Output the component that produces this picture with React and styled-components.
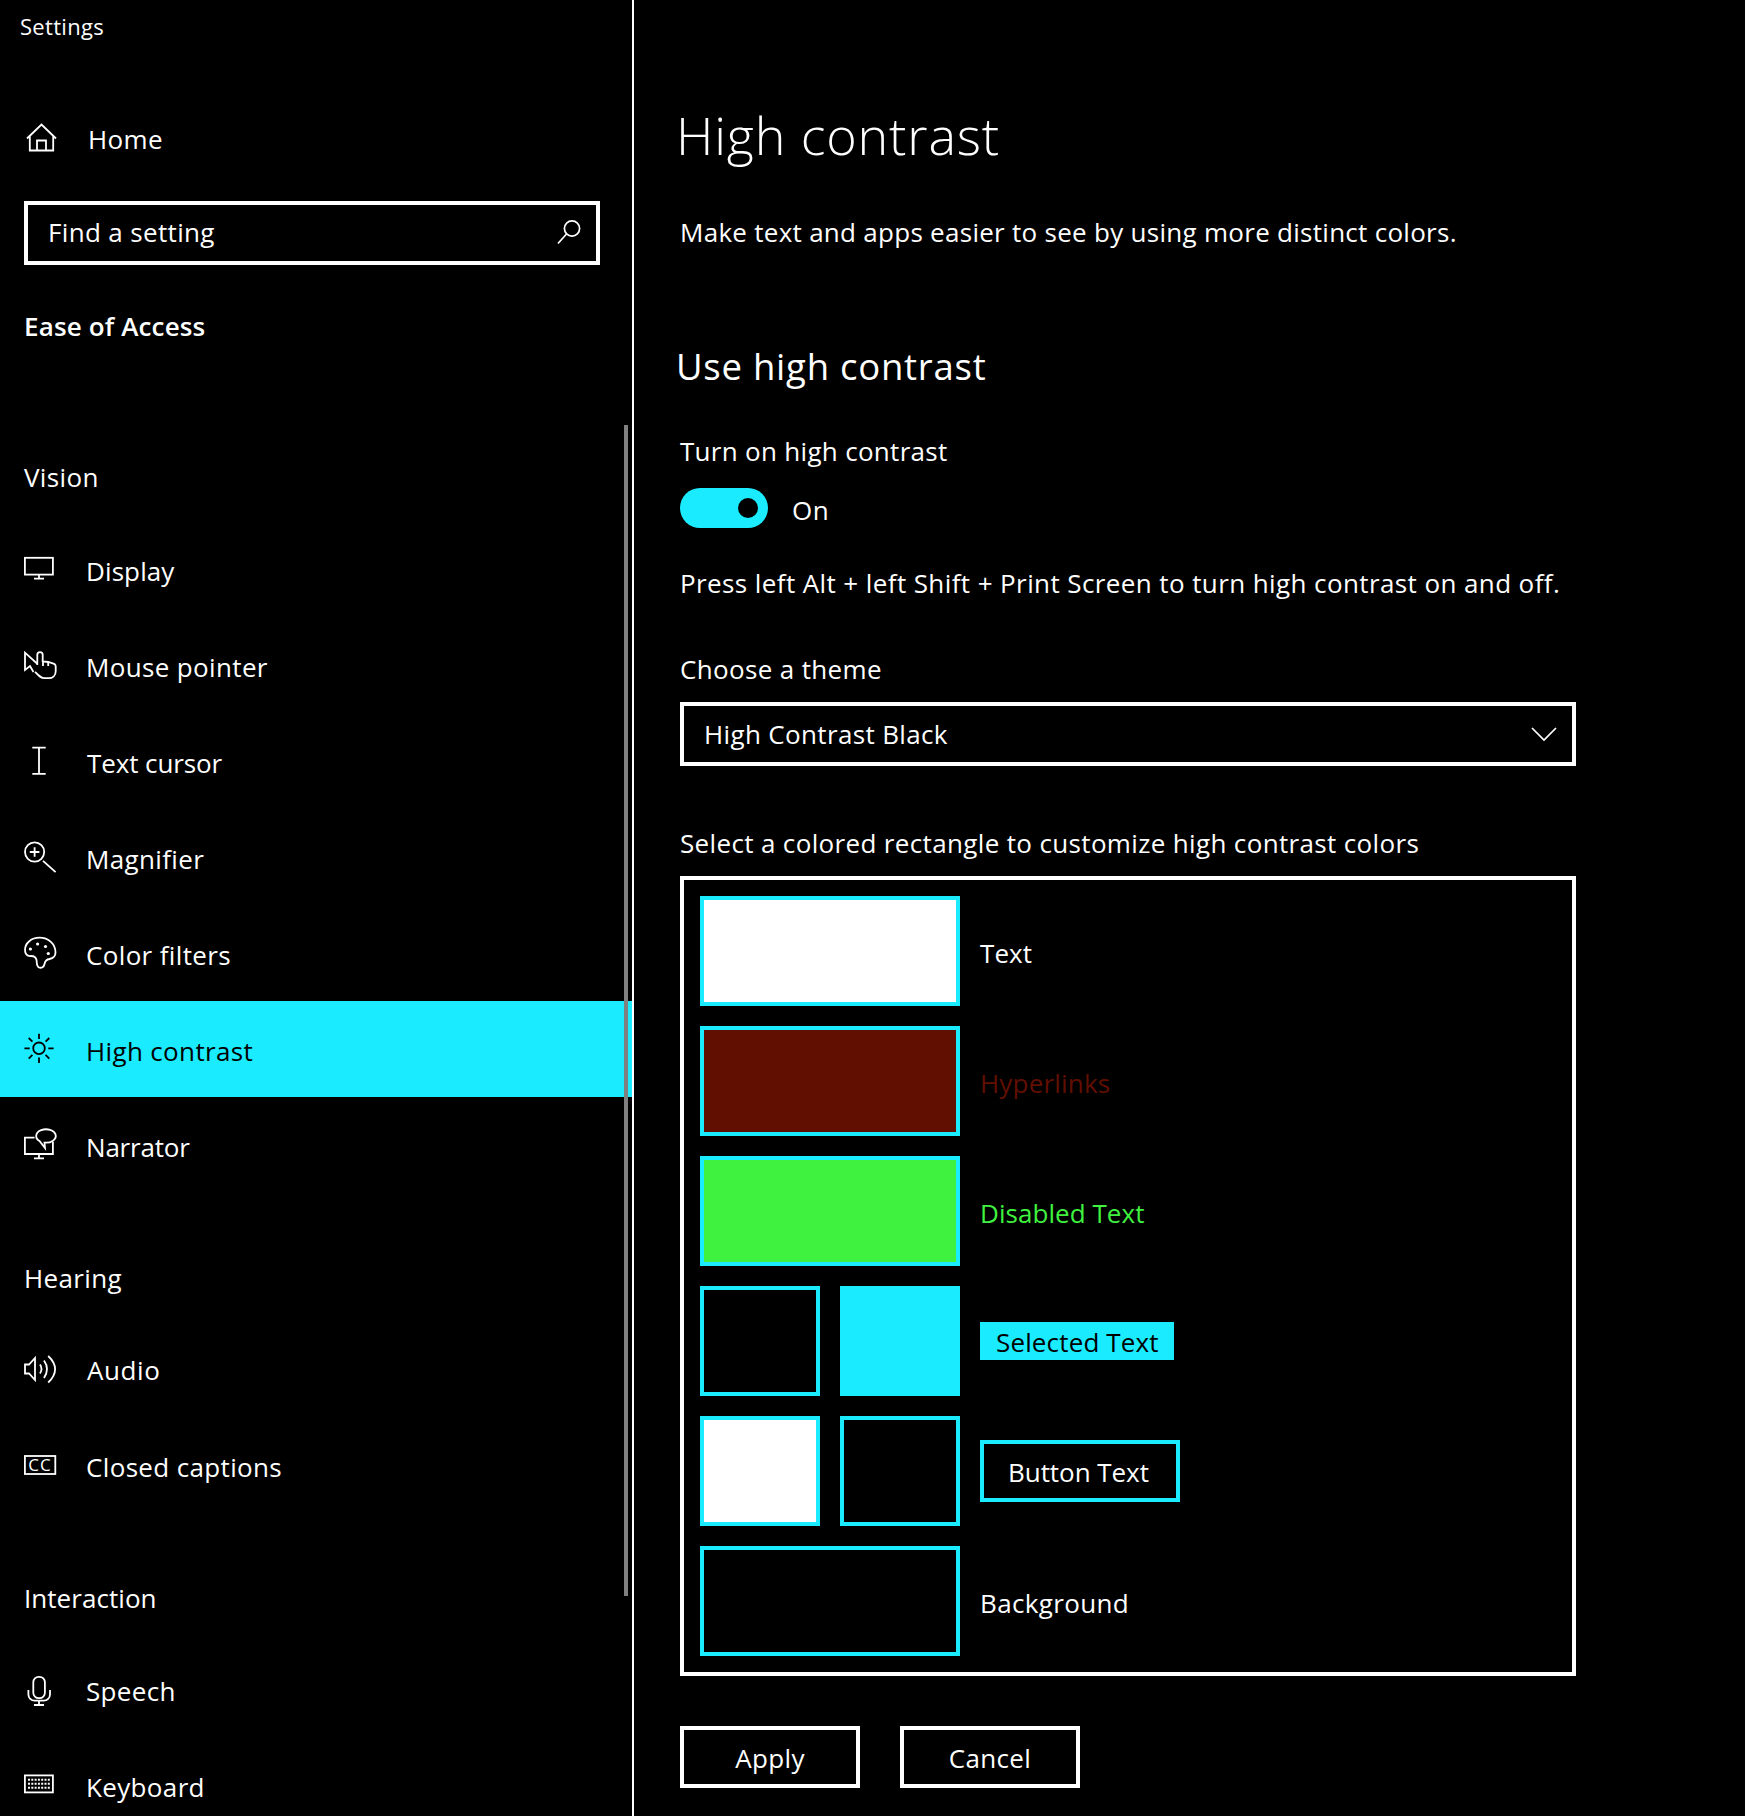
import React from 'react';
import styled, {createGlobalStyle} from 'styled-components';

const CYAN = '#1aebff';
const FONT = '"Open Sans", "Noto Sans", sans-serif';

const GlobalStyle = createGlobalStyle`
    html, body {
        margin: 0;
        background: #000;
    }
    body {
        font-family: ${FONT};
        color: #fff;
    }
`;

const Page = styled.div`
    display: flex;
    width: 1745px;
    height: 1816px;
    overflow: hidden;
    background: #000;
`;

const Sidebar = styled.nav`
    position: relative;
    flex: none;
    box-sizing: content-box;
    width: 632px;
    height: 1816px;
    border-right: 2px solid #fff;
    overflow: hidden;
`;

const WindowTitle = styled.div`
    height: 91px;
    padding: 7px 0 0 20px;
    box-sizing: border-box;
    font-size: 22px;
    line-height: 38px;
    letter-spacing: 0.3px;
`;

const NavItem = styled.div`
    display: flex;
    align-items: center;
    height: 96px;
    padding-left: 24px;
    background: ${p => (p.$active ? CYAN : 'transparent')};
    color: ${p => (p.$active ? '#000' : '#fff')};
`;

const IconSlot = styled.div`
    flex: none;
    width: 62px;
`;

const NavText = styled.span`
    margin-left: ${p => p.$shift || 0}px;
    padding-top: ${p => p.$drop ?? 3}px;
    font-size: 26px;
    line-height: 40px;
    letter-spacing: ${p => p.$ls ?? 0.35}px;
`;

const SearchBox = styled.div`
    display: flex;
    align-items: center;
    justify-content: space-between;
    box-sizing: border-box;
    width: 576px;
    height: 64px;
    margin: 14px 0 0 24px;
    padding: 0 14px 2px 20px;
    border: 4px solid #fff;
    font-size: 26px;
    letter-spacing: 0.35px;
`;

const SectionTitle = styled.div`
    margin: 41px 0 111px 24px;
    font-size: 26px;
    font-weight: 600;
    line-height: 40px;
    letter-spacing: 0.15px;
`;

const GroupLabel = styled.div`
    height: ${p => p.$height || 64}px;
    margin: ${p => (p.$first ? 0 : `${p.$gap || 65}px`)} 0 0 24px;
    font-size: 26px;
    line-height: 40px;
    letter-spacing: ${p => p.$ls ?? 0.35}px;
`;

const ScrollThumb = styled.div`
    position: absolute;
    top: 425px;
    left: 624px;
    width: 4px;
    height: 1171px;
    background: #808080;
`;

const Main = styled.main`
    flex: 1;
    padding: 103px 0 0 46px;
`;

const PageTitle = styled.h1`
    margin: 0 0 0 -4px;
    font-size: 52px;
    font-weight: 300;
    line-height: 64px;
    letter-spacing: 0.85px;
`;

const SubTitle = styled.h2`
    margin: 89px 0 0 -4px;
    font-size: 36.5px;
    font-weight: 400;
    line-height: 50px;
    letter-spacing: 0.75px;
`;

const BodyText = styled.div`
    margin-top: ${p => p.$top}px;
    font-size: 26px;
    line-height: 40px;
    letter-spacing: ${p => p.$ls ?? 0.35}px;
`;

const ToggleRow = styled.div`
    display: flex;
    align-items: center;
    gap: 24px;
    height: 40px;
    margin-top: 17px;
`;

const ToggleTrack = styled.div`
    position: relative;
    width: 88px;
    height: 40px;
    border-radius: 20px;
    background: ${CYAN};
`;

const ToggleKnob = styled.div`
    position: absolute;
    top: 10px;
    right: 10px;
    width: 20px;
    height: 20px;
    border-radius: 50%;
    background: #000;
`;

const Dropdown = styled.div`
    display: flex;
    align-items: center;
    justify-content: space-between;
    box-sizing: border-box;
    width: 896px;
    height: 64px;
    margin-top: 13px;
    padding: 0 15px 0 20px;
    border: 4px solid #fff;
    font-size: 26px;
    letter-spacing: 0.35px;
`;

const ColorBox = styled.div`
    display: flex;
    flex-direction: column;
    gap: 20px;
    box-sizing: border-box;
    width: 896px;
    margin-top: 13px;
    padding: 16px;
    border: 4px solid #fff;
`;

const SwatchRow = styled.div`
    display: flex;
    align-items: center;
    gap: 20px;
    height: 110px;
`;

const SwatchPair = styled.div`
    display: flex;
    gap: 20px;
    width: 260px;
`;

const Swatch = styled.div`
    box-sizing: border-box;
    width: ${p => (p.$wide ? '260px' : '120px')};
    height: 110px;
    border: 4px solid ${CYAN};
    background: ${p => p.$fill};
`;

const SwatchLabel = styled.span`
    padding-top: 3px;
    font-size: 26px;
    line-height: 40px;
    letter-spacing: ${p => p.$ls ?? 0.35}px;
    color: ${p => p.$color || '#fff'};
`;

const SelectedChip = styled(SwatchLabel)`
    box-sizing: border-box;
    width: 194px;
    height: 38px;
    padding: 0 0 0 16px;
    background: ${CYAN};
    color: #000;
    white-space: nowrap;
`;

const ButtonChip = styled(SwatchLabel)`
    box-sizing: border-box;
    display: flex;
    align-items: center;
    width: 200px;
    height: 62px;
    padding: 2px 0 0 24px;
    border: 4px solid ${CYAN};
`;

const Actions = styled.div`
    display: flex;
    gap: 40px;
    margin-top: 50px;
`;

const ActionButton = styled.div`
    display: flex;
    align-items: center;
    justify-content: center;
    box-sizing: border-box;
    width: 180px;
    height: 62px;
    padding-top: 2px;
    border: 4px solid #fff;
    font-size: 26px;
    letter-spacing: 0.35px;
`;

const Glyph = ({children}) => (
    <svg width="34" height="34" viewBox="0 0 34 34" fill="none" stroke="currentColor"
         strokeWidth="1.8" style={{display: 'block', overflow: 'visible'}}>
        {children}
    </svg>
);

const icons = {
    home: <>
        <path d="M3 16.5 17.5 2.5 32 16.5"/>
        <path d="M5.8 14.2V28.5H29.2V14.2"/>
        <path d="M13 28.5V18.5H22V28.5"/>
    </>,
    display: <>
        <rect x="0.9" y="5.8" width="28" height="16.8"/>
        <path d="M15 22.6V26.7M10 26.7H20"/>
    </>,
    pointer: <>
        <path d="M13 15.5 1 4.7V22L6 18 9.5 24"/>
        <path d="M13.3 17V6.8a2.7 2.7 0 0 1 5.4 0V13.4l5.6.6 5.2 1.6c1.5.5 2.2 1.5 2.2 3v4.6c0 4.2-3 7-7 7h-4.2c-3.5 0-5.5-2.2-9.5-6.4"/>
        <path d="M24.2 14V18M19 13.4V18"/>
    </>,
    cursor: <path d="M8.3 3.6H21.7M8.3 29.8H21.7M15 3.6V29.8"/>,
    magnifier: <>
        <circle cx="10.6" cy="12" r="9.6"/>
        <path d="M19 20.8 31.6 32.2M5.8 12H15.4M10.6 7.2V16.8"/>
    </>,
    palette: <>
        <path d="M15.5 1.7C24.5 1.7 31.5 8 31.5 16.5C31.5 21 28 22.5 25.5 23C22 23.5 21 25.5 20.5 28C20 31 17.5 32.3 15 31.5C12.5 30.5 13 27 12.5 24C12 21.5 10 20 7 20C3 20.5 1 18 1 14C1 7 7.5 1.7 15.5 1.7Z"/>
        <circle cx="13.6" cy="8" r="1.6" fill="currentColor" stroke="none"/>
        <circle cx="6.4" cy="13" r="1.6" fill="currentColor" stroke="none"/>
        <circle cx="21.5" cy="10.5" r="1.6" fill="currentColor" stroke="none"/>
        <circle cx="24.3" cy="17.5" r="1.6" fill="currentColor" stroke="none"/>
    </>,
    sun: <>
        <circle cx="15" cy="16.3" r="5.8"/>
        <path d="M15 1.7V7M15 25.6V31M.4 16.3H5.7M24.3 16.3H29.6M4.7 6 8.4 9.7M21.6 22.9 25.3 26.6M25.3 6 21.6 9.7M8.4 22.9 4.7 26.6"/>
    </>,
    narrator: <>
        <path d="M10.5 9.7H.9V26H28.9V14"/>
        <path d="M15 26V30.3M10 30.3H20"/>
        <path d="M15.5 13A9.8 6.7 0 1 1 20.5 14.6L21 20Z"/>
    </>,
    audio: <>
        <path d="M1 11.5H5L11 5V27L5 20.5H1Z"/>
        <path d="M16 11.5Q19 16 16 20.5M20 7.5Q26 16 20 25M24.2 3Q38 16 24.2 29.5"/>
    </>,
    captions: <>
        <rect x="0.9" y="7" width="30.4" height="18"/>
        <text x="16" y="21.5" textAnchor="middle" fontSize="17" fill="currentColor" stroke="none"
              fontFamily={FONT} letterSpacing="1">CC</text>
    </>,
    mic: <>
        <rect x="9.3" y="2.8" width="11.6" height="21.4" rx="5.4"/>
        <path d="M4.4 16V20.4A6.3 6.3 0 0 0 10.7 26.7H19.7A6.3 6.3 0 0 0 26 20.4V16"/>
        <path d="M15 26.7V31M10 31H20"/>
    </>,
    keyboard: <>
        <rect x="0.9" y="5.4" width="28" height="17"/>
        <path d="M4 9.8H26M4 13.8H26M4 17.8H26" strokeDasharray="2 1.3" strokeWidth="1.9"/>
    </>,
};

const navGroups = [
    {label: 'Vision', items: [
        {icon: 'display', text: 'Display', ls: 0.1},
        {icon: 'pointer', text: 'Mouse pointer'},
        {icon: 'cursor', text: 'Text cursor', shift: 1, ls: -0.1},
        {icon: 'magnifier', text: 'Magnifier'},
        {icon: 'palette', text: 'Color filters'},
        {icon: 'sun', text: 'High contrast', active: true},
        {icon: 'narrator', text: 'Narrator', ls: -0.2},
    ]},
    {label: 'Hearing', items: [
        {icon: 'audio', text: 'Audio', shift: 1, ls: 0.6, drop: 0},
        {icon: 'captions', text: 'Closed captions', drop: 1},
    ]},
    {label: 'Interaction', gap: 64, height: 65, ls: 0.05, items: [
        {icon: 'mic', text: 'Speech', drop: 0},
        {icon: 'keyboard', text: 'Keyboard', drop: 0},
    ]},
];

const swatchRows = [
    {swatches: [{fill: '#fff', wide: true}], label: <SwatchLabel $ls={0.1}>Text</SwatchLabel>},
    {swatches: [{fill: '#600f00', wide: true}], label: <SwatchLabel $color="#600f00" $ls={0.2}>Hyperlinks</SwatchLabel>},
    {swatches: [{fill: '#3ff23f', wide: true}], label: <SwatchLabel $color="#3ff23f" $ls={0.05}>Disabled Text</SwatchLabel>},
    {swatches: [{fill: '#000'}, {fill: CYAN}], label: <SelectedChip $ls={0.15}>Selected Text</SelectedChip>},
    {swatches: [{fill: '#fff'}, {fill: '#000'}], label: <ButtonChip $ls={-0.05}>Button Text</ButtonChip>},
    {swatches: [{fill: '#000', wide: true}], label: <SwatchLabel>Background</SwatchLabel>},
];

const App = () => (
    <Page>
        <GlobalStyle/>
        <Sidebar>
            <WindowTitle>Settings</WindowTitle>
            <NavItem>
                <IconSlot><Glyph>{icons.home}</Glyph></IconSlot>
                <NavText $shift={2} $drop={0}>Home</NavText>
            </NavItem>
            <SearchBox>
                <span>Find a setting</span>
                <svg width="26" height="26" viewBox="0 0 26 26" fill="none" stroke="currentColor" strokeWidth="1.7">
                    <circle cx="16" cy="9.5" r="7.6"/>
                    <path d="M10.5 15 2 24.5"/>
                </svg>
            </SearchBox>
            <SectionTitle>Ease of Access</SectionTitle>
            {navGroups.map((group, i) => (
                <React.Fragment key={group.label}>
                    <GroupLabel $first={i === 0} $gap={group.gap} $height={group.height} $ls={group.ls}>
                        {group.label}
                    </GroupLabel>
                    {group.items.map(item => (
                        <NavItem key={item.text} $active={item.active}>
                            <IconSlot><Glyph>{icons[item.icon]}</Glyph></IconSlot>
                            <NavText $shift={item.shift} $ls={item.ls} $drop={item.drop}>{item.text}</NavText>
                        </NavItem>
                    ))}
                </React.Fragment>
            ))}
            <ScrollThumb/>
        </Sidebar>
        <Main>
            <PageTitle>High contrast</PageTitle>
            <BodyText $top={45} $ls={0.28}>Make text and apps easier to see by using more distinct colors.</BodyText>
            <SubTitle>Use high contrast</SubTitle>
            <BodyText $top={40} $ls={0.3}>Turn on high contrast</BodyText>
            <ToggleRow>
                <ToggleTrack><ToggleKnob/></ToggleTrack>
                <BodyText $top={4} $ls={0.5}>On</BodyText>
            </ToggleRow>
            <BodyText $top={35} $ls={0.4}>Press left Alt + left Shift + Print Screen to turn high contrast on and off.</BodyText>
            <BodyText $top={46}>Choose a theme</BodyText>
            <Dropdown>
                <span>High Contrast Black</span>
                <svg width="26" height="16" viewBox="0 0 26 16" fill="none" stroke="currentColor" strokeWidth="1.7">
                    <path d="M1 2 13 14 25 2"/>
                </svg>
            </Dropdown>
            <BodyText $top={57}>Select a colored rectangle to customize high contrast colors</BodyText>
            <ColorBox>
                {swatchRows.map((row, i) => (
                    <SwatchRow key={i}>
                        <SwatchPair>
                            {row.swatches.map((s, j) => <Swatch key={j} $fill={s.fill} $wide={s.wide}/>)}
                        </SwatchPair>
                        {row.label}
                    </SwatchRow>
                ))}
            </ColorBox>
            <Actions>
                <ActionButton>Apply</ActionButton>
                <ActionButton>Cancel</ActionButton>
            </Actions>
        </Main>
    </Page>
);

export default App;
